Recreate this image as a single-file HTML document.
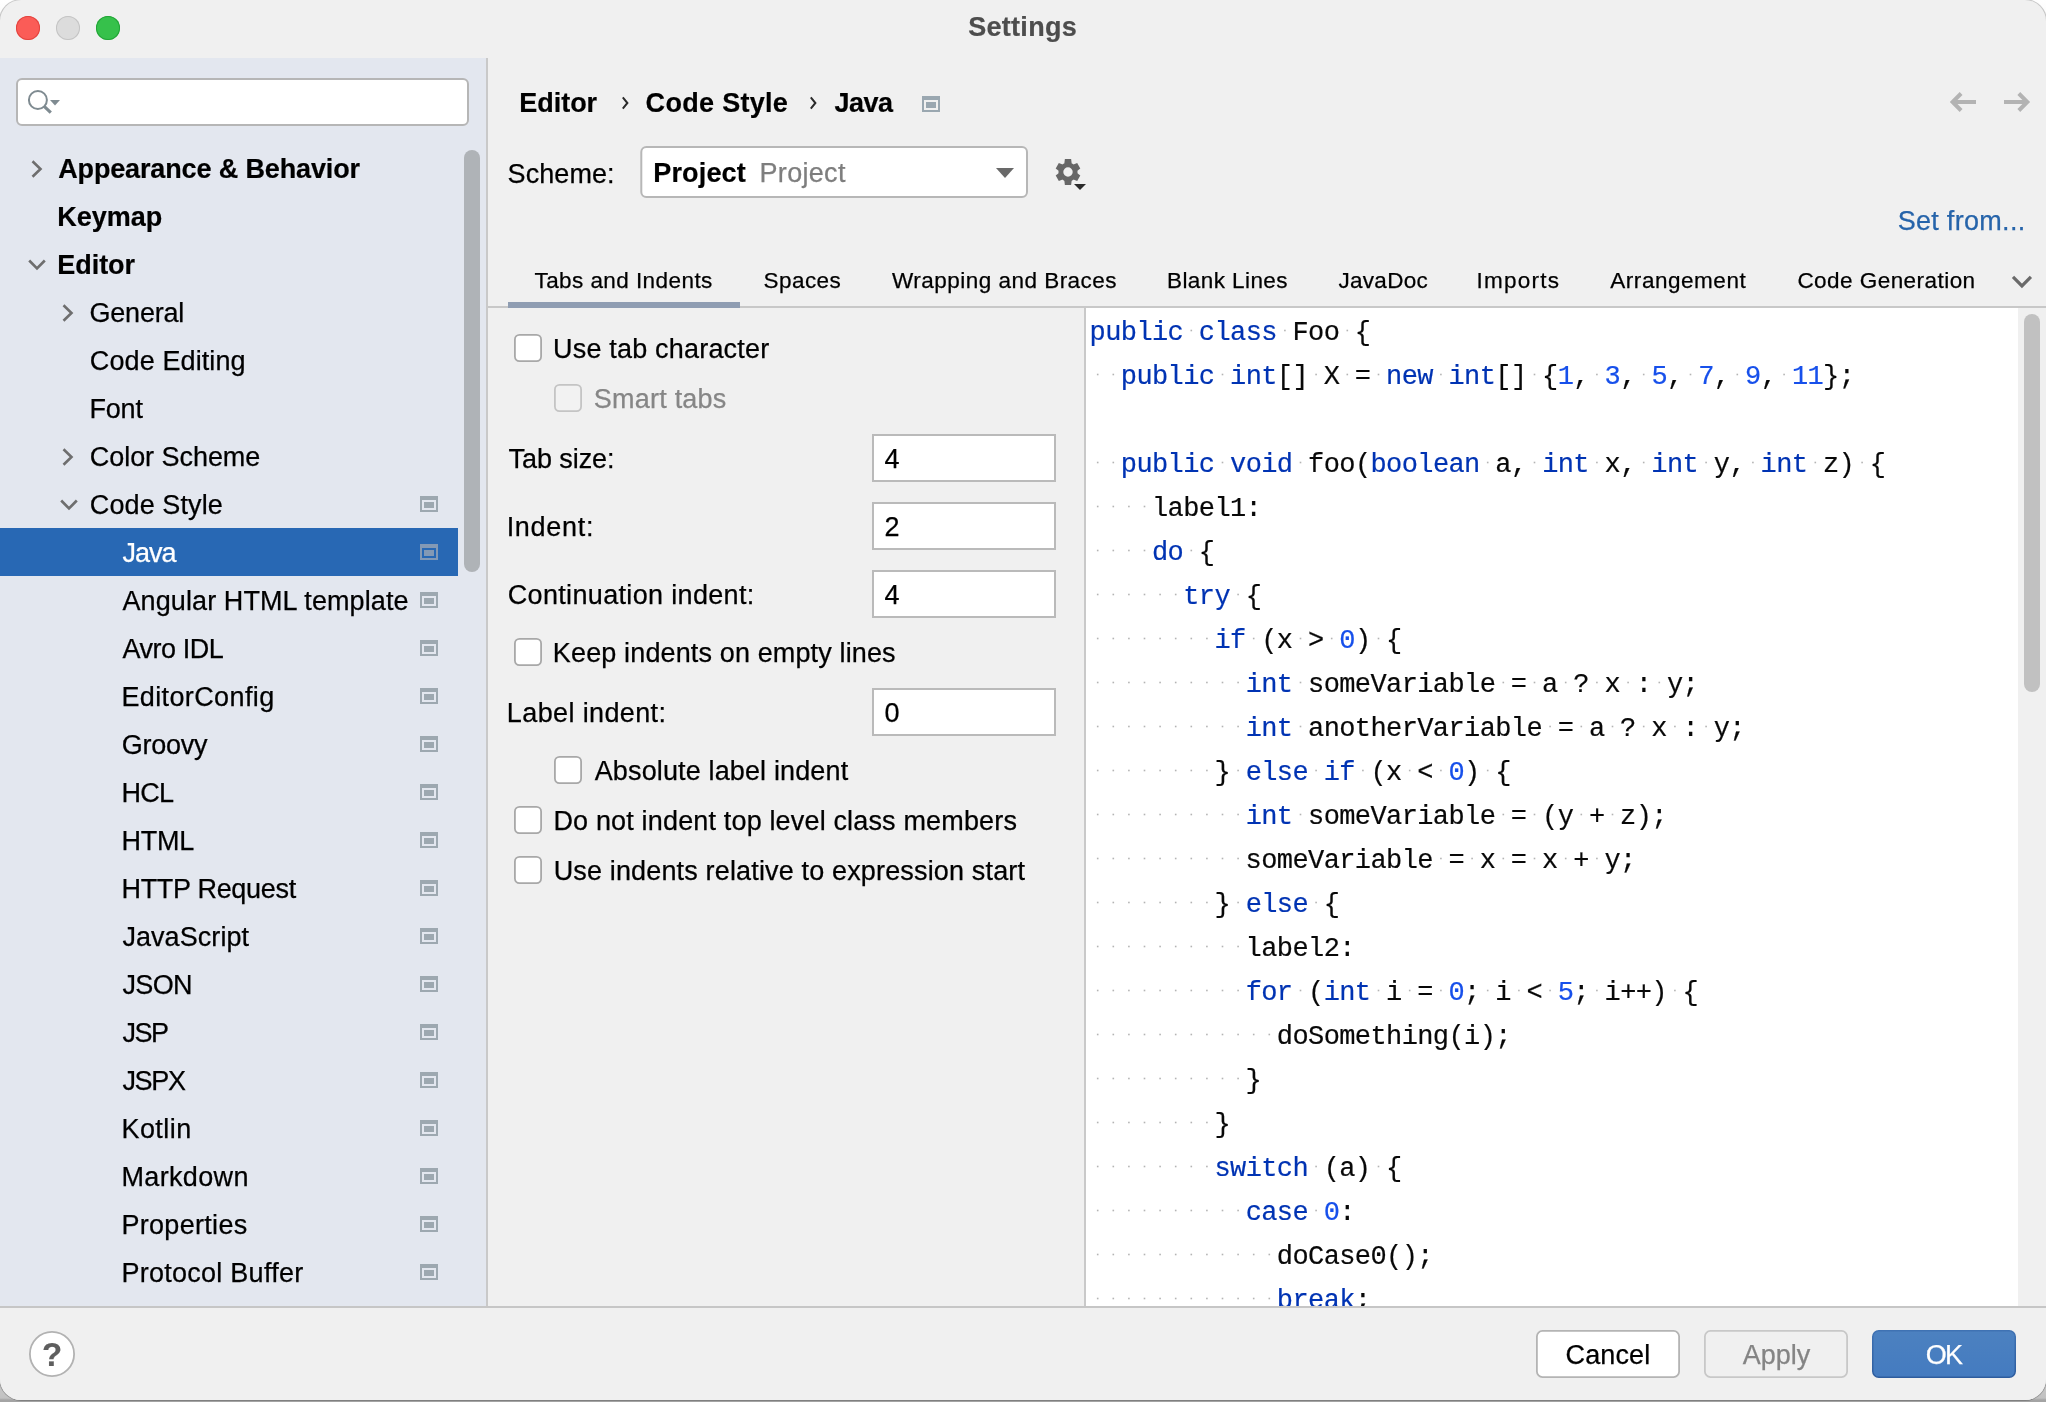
<!DOCTYPE html>
<html><head><meta charset="utf-8"><title>Settings</title>
<style>
html,body{margin:0;padding:0;}
body{width:2046px;height:1402px;overflow:hidden;background:#fff;font-family:"Liberation Sans",sans-serif;position:relative;}
.t{position:absolute;white-space:pre;font-family:"Liberation Sans",sans-serif;}
.i{position:absolute;overflow:visible;}
.abs{position:absolute;}
#shadow{position:absolute;left:0;top:0;width:2046px;height:1402px;background:linear-gradient(#fff 0,#f4f4f4 40px,#d8d8d8 1340px,#c2c2c2 1398px,#a4a4a4 1400px,#a4a4a4 1402px);}
#win{will-change:transform;position:absolute;left:0;top:0;width:2046px;height:1400px;border-radius:21px;background:#f0f0f0;overflow:hidden;box-shadow:0 0 0 1px rgba(0,0,0,.22);}
#side{position:absolute;left:0;top:58px;width:487px;height:1248px;background:#e3e7ef;overflow:hidden;}
#sideborder{position:absolute;left:486px;top:58px;width:2px;height:1248px;background:#c9c9c9;}
#code{position:absolute;left:1086px;top:308px;width:932px;height:998px;background:#fff;overflow:hidden;}
.cl{position:absolute;left:3.6px;height:44px;line-height:44px;font-family:"Liberation Mono",monospace;font-size:27px;letter-spacing:-0.6px;white-space:pre;color:#080808;-webkit-text-stroke:0.2px;}
.k{color:#0033b3}.n{color:#1750eb}
.cb{position:absolute;width:24.4px;height:24.4px;border:1.8px solid #a8a8a8;border-radius:5.5px;background:#fff;}
.in{position:absolute;left:872px;width:180px;height:44px;border:2px solid #bababa;background:#fff;}
.btn{position:absolute;top:1331px;width:140px;height:44px;border:1.5px solid #c4c4c4;border-radius:7px;background:#fff;box-sizing:content-box;}
</style></head><body>
<div id="shadow"></div>
<div id="win">

<div class="abs" style="left:16px;top:16px;width:24px;height:24px;border-radius:50%;background:#fb5c57;box-shadow:inset 0 0 0 1px #e2443f"></div>
<div class="abs" style="left:56px;top:16px;width:24px;height:24px;border-radius:50%;background:#dcdcdc;box-shadow:inset 0 0 0 1px #c4c4c4"></div>
<div class="abs" style="left:96px;top:16px;width:24px;height:24px;border-radius:50%;background:#36c14b;box-shadow:inset 0 0 0 1px #22a437"></div>
<div class="t" style="left:968.18px;top:3.0px;height:48px;line-height:48px;font-size:27px;font-weight:700;color:#4d4d4d;letter-spacing:0.292px;-webkit-text-stroke:0.2px;">Settings</div>
<div id="side">
</div>
<div id="sideborder"></div>
<svg class="i" style="left:15px;top:77px" width="457" height="52" viewBox="15 77 457 52"><rect x="17.0" y="79.0" width="451" height="46" rx="5.0" fill="#fff" stroke="#b6b6b6" stroke-width="2"/></svg>
<svg class="i" style="left:24px;top:86px" width="40" height="30" viewBox="24 86 40 30"><circle cx="37.9" cy="100" r="9" fill="none" stroke="#7f8b91" stroke-width="2"/><path d="M43.9,106.2 L50.8,112.6" stroke="#7f8b91" stroke-width="3.2" fill="none"/><path d="M50,100 H60 L55,105.6z" fill="#7f8b91"/></svg>
<div class="abs" style="left:0;top:528px;width:458px;height:48px;background:#2868b4"></div>
<div class="t" style="left:58.17px;top:144.5px;height:48px;line-height:48px;font-size:27px;font-weight:700;color:#000;letter-spacing:-0.136px;-webkit-text-stroke:0.2px;">Appearance &amp; Behavior</div>
<svg class="i" style="left:24.6px;top:157px" width="24" height="24" viewBox="-12 -12 24 24"><path d="M-4.50,-7.80 L3.50,0 L-4.50,7.80" fill="none" stroke="#6e6e6e" stroke-width="2.6" stroke-linecap="butt" stroke-linejoin="miter"/></svg>
<div class="t" style="left:57.24px;top:192.5px;height:48px;line-height:48px;font-size:27px;font-weight:700;color:#000;letter-spacing:-0.014px;-webkit-text-stroke:0.2px;">Keymap</div>
<div class="t" style="left:57.24px;top:240.5px;height:48px;line-height:48px;font-size:27px;font-weight:700;color:#000;letter-spacing:-0.034px;-webkit-text-stroke:0.2px;">Editor</div>
<svg class="i" style="left:25.0px;top:252.5px" width="24" height="24" viewBox="-12 -12 24 24"><path d="M-7.80,-4.50 L0,3.50 L7.80,-4.50" fill="none" stroke="#6e6e6e" stroke-width="2.6" stroke-linecap="butt" stroke-linejoin="miter"/></svg>
<div class="t" style="left:89.61px;top:288.5px;height:48px;line-height:48px;font-size:27px;font-weight:400;color:#000;letter-spacing:-0.255px;-webkit-text-stroke:0.25px;">General</div>
<svg class="i" style="left:56.400000000000006px;top:301px" width="24" height="24" viewBox="-12 -12 24 24"><path d="M-4.50,-7.80 L3.50,0 L-4.50,7.80" fill="none" stroke="#6e6e6e" stroke-width="2.6" stroke-linecap="butt" stroke-linejoin="miter"/></svg>
<div class="t" style="left:89.8px;top:336.5px;height:48px;line-height:48px;font-size:27px;font-weight:400;color:#000;letter-spacing:0.108px;-webkit-text-stroke:0.25px;">Code Editing</div>
<div class="t" style="left:89.46px;top:384.5px;height:48px;line-height:48px;font-size:27px;font-weight:400;color:#000;letter-spacing:-0.176px;-webkit-text-stroke:0.25px;">Font</div>
<div class="t" style="left:89.8px;top:432.5px;height:48px;line-height:48px;font-size:27px;font-weight:400;color:#000;letter-spacing:-0.051px;-webkit-text-stroke:0.25px;">Color Scheme</div>
<svg class="i" style="left:56.400000000000006px;top:445px" width="24" height="24" viewBox="-12 -12 24 24"><path d="M-4.50,-7.80 L3.50,0 L-4.50,7.80" fill="none" stroke="#6e6e6e" stroke-width="2.6" stroke-linecap="butt" stroke-linejoin="miter"/></svg>
<div class="t" style="left:89.8px;top:480.5px;height:48px;line-height:48px;font-size:27px;font-weight:400;color:#000;letter-spacing:0.101px;-webkit-text-stroke:0.25px;">Code Style</div>
<svg class="i" style="left:56.80000000000001px;top:492.5px" width="24" height="24" viewBox="-12 -12 24 24"><path d="M-7.80,-4.50 L0,3.50 L7.80,-4.50" fill="none" stroke="#6e6e6e" stroke-width="2.6" stroke-linecap="butt" stroke-linejoin="miter"/></svg>
<svg class="i" style="left:420px;top:496px" width="18" height="16" viewBox="0 0 18 16"><path d="M0,0H18V16H0z M2,4V14H16V4z" fill="#9da8b0" fill-rule="evenodd"/><rect x="4" y="6" width="10" height="6" fill="#9da8b0"/></svg>
<div class="t" style="left:122.46px;top:528.5px;height:48px;line-height:48px;font-size:27px;font-weight:400;color:#fff;letter-spacing:-0.964px;-webkit-text-stroke:0.25px;">Java</div>
<svg class="i" style="left:420px;top:544px" width="18" height="16" viewBox="0 0 18 16"><path d="M0,0H18V16H0z M2,4V14H16V4z" fill="#8399b5" fill-rule="evenodd"/><rect x="4" y="6" width="10" height="6" fill="#8399b5"/></svg>
<div class="t" style="left:122.53px;top:576.5px;height:48px;line-height:48px;font-size:27px;font-weight:400;color:#000;letter-spacing:0.094px;-webkit-text-stroke:0.25px;">Angular HTML template</div>
<svg class="i" style="left:420px;top:592px" width="18" height="16" viewBox="0 0 18 16"><path d="M0,0H18V16H0z M2,4V14H16V4z" fill="#9da8b0" fill-rule="evenodd"/><rect x="4" y="6" width="10" height="6" fill="#9da8b0"/></svg>
<div class="t" style="left:122.53px;top:624.5px;height:48px;line-height:48px;font-size:27px;font-weight:400;color:#000;letter-spacing:-0.47px;-webkit-text-stroke:0.25px;">Avro IDL</div>
<svg class="i" style="left:420px;top:640px" width="18" height="16" viewBox="0 0 18 16"><path d="M0,0H18V16H0z M2,4V14H16V4z" fill="#9da8b0" fill-rule="evenodd"/><rect x="4" y="6" width="10" height="6" fill="#9da8b0"/></svg>
<div class="t" style="left:121.46px;top:672.5px;height:48px;line-height:48px;font-size:27px;font-weight:400;color:#000;letter-spacing:0.374px;-webkit-text-stroke:0.25px;">EditorConfig</div>
<svg class="i" style="left:420px;top:688px" width="18" height="16" viewBox="0 0 18 16"><path d="M0,0H18V16H0z M2,4V14H16V4z" fill="#9da8b0" fill-rule="evenodd"/><rect x="4" y="6" width="10" height="6" fill="#9da8b0"/></svg>
<div class="t" style="left:121.64px;top:720.5px;height:48px;line-height:48px;font-size:27px;font-weight:400;color:#000;letter-spacing:-0.24px;-webkit-text-stroke:0.25px;">Groovy</div>
<svg class="i" style="left:420px;top:736px" width="18" height="16" viewBox="0 0 18 16"><path d="M0,0H18V16H0z M2,4V14H16V4z" fill="#9da8b0" fill-rule="evenodd"/><rect x="4" y="6" width="10" height="6" fill="#9da8b0"/></svg>
<div class="t" style="left:121.46px;top:768.5px;height:48px;line-height:48px;font-size:27px;font-weight:400;color:#000;letter-spacing:-0.736px;-webkit-text-stroke:0.25px;">HCL</div>
<svg class="i" style="left:420px;top:784px" width="18" height="16" viewBox="0 0 18 16"><path d="M0,0H18V16H0z M2,4V14H16V4z" fill="#9da8b0" fill-rule="evenodd"/><rect x="4" y="6" width="10" height="6" fill="#9da8b0"/></svg>
<div class="t" style="left:121.46px;top:816.5px;height:48px;line-height:48px;font-size:27px;font-weight:400;color:#000;letter-spacing:-0.23px;-webkit-text-stroke:0.25px;">HTML</div>
<svg class="i" style="left:420px;top:832px" width="18" height="16" viewBox="0 0 18 16"><path d="M0,0H18V16H0z M2,4V14H16V4z" fill="#9da8b0" fill-rule="evenodd"/><rect x="4" y="6" width="10" height="6" fill="#9da8b0"/></svg>
<div class="t" style="left:121.46px;top:864.5px;height:48px;line-height:48px;font-size:27px;font-weight:400;color:#000;letter-spacing:-0.302px;-webkit-text-stroke:0.25px;">HTTP Request</div>
<svg class="i" style="left:420px;top:880px" width="18" height="16" viewBox="0 0 18 16"><path d="M0,0H18V16H0z M2,4V14H16V4z" fill="#9da8b0" fill-rule="evenodd"/><rect x="4" y="6" width="10" height="6" fill="#9da8b0"/></svg>
<div class="t" style="left:122.4px;top:912.5px;height:48px;line-height:48px;font-size:27px;font-weight:400;color:#000;letter-spacing:0.069px;-webkit-text-stroke:0.25px;">JavaScript</div>
<svg class="i" style="left:420px;top:928px" width="18" height="16" viewBox="0 0 18 16"><path d="M0,0H18V16H0z M2,4V14H16V4z" fill="#9da8b0" fill-rule="evenodd"/><rect x="4" y="6" width="10" height="6" fill="#9da8b0"/></svg>
<div class="t" style="left:122.4px;top:960.5px;height:48px;line-height:48px;font-size:27px;font-weight:400;color:#000;letter-spacing:-0.635px;-webkit-text-stroke:0.25px;">JSON</div>
<svg class="i" style="left:420px;top:976px" width="18" height="16" viewBox="0 0 18 16"><path d="M0,0H18V16H0z M2,4V14H16V4z" fill="#9da8b0" fill-rule="evenodd"/><rect x="4" y="6" width="10" height="6" fill="#9da8b0"/></svg>
<div class="t" style="left:122.4px;top:1008.5px;height:48px;line-height:48px;font-size:27px;font-weight:400;color:#000;letter-spacing:-1.442px;-webkit-text-stroke:0.25px;">JSP</div>
<svg class="i" style="left:420px;top:1024px" width="18" height="16" viewBox="0 0 18 16"><path d="M0,0H18V16H0z M2,4V14H16V4z" fill="#9da8b0" fill-rule="evenodd"/><rect x="4" y="6" width="10" height="6" fill="#9da8b0"/></svg>
<div class="t" style="left:122.4px;top:1056.5px;height:48px;line-height:48px;font-size:27px;font-weight:400;color:#000;letter-spacing:-1.294px;-webkit-text-stroke:0.25px;">JSPX</div>
<svg class="i" style="left:420px;top:1072px" width="18" height="16" viewBox="0 0 18 16"><path d="M0,0H18V16H0z M2,4V14H16V4z" fill="#9da8b0" fill-rule="evenodd"/><rect x="4" y="6" width="10" height="6" fill="#9da8b0"/></svg>
<div class="t" style="left:121.46px;top:1104.5px;height:48px;line-height:48px;font-size:27px;font-weight:400;color:#000;letter-spacing:0.442px;-webkit-text-stroke:0.25px;">Kotlin</div>
<svg class="i" style="left:420px;top:1120px" width="18" height="16" viewBox="0 0 18 16"><path d="M0,0H18V16H0z M2,4V14H16V4z" fill="#9da8b0" fill-rule="evenodd"/><rect x="4" y="6" width="10" height="6" fill="#9da8b0"/></svg>
<div class="t" style="left:121.46px;top:1152.5px;height:48px;line-height:48px;font-size:27px;font-weight:400;color:#000;letter-spacing:0.353px;-webkit-text-stroke:0.25px;">Markdown</div>
<svg class="i" style="left:420px;top:1168px" width="18" height="16" viewBox="0 0 18 16"><path d="M0,0H18V16H0z M2,4V14H16V4z" fill="#9da8b0" fill-rule="evenodd"/><rect x="4" y="6" width="10" height="6" fill="#9da8b0"/></svg>
<div class="t" style="left:121.46px;top:1200.5px;height:48px;line-height:48px;font-size:27px;font-weight:400;color:#000;letter-spacing:0.301px;-webkit-text-stroke:0.25px;">Properties</div>
<svg class="i" style="left:420px;top:1216px" width="18" height="16" viewBox="0 0 18 16"><path d="M0,0H18V16H0z M2,4V14H16V4z" fill="#9da8b0" fill-rule="evenodd"/><rect x="4" y="6" width="10" height="6" fill="#9da8b0"/></svg>
<div class="t" style="left:121.46px;top:1248.5px;height:48px;line-height:48px;font-size:27px;font-weight:400;color:#000;letter-spacing:0.259px;-webkit-text-stroke:0.25px;">Protocol Buffer</div>
<svg class="i" style="left:420px;top:1264px" width="18" height="16" viewBox="0 0 18 16"><path d="M0,0H18V16H0z M2,4V14H16V4z" fill="#9da8b0" fill-rule="evenodd"/><rect x="4" y="6" width="10" height="6" fill="#9da8b0"/></svg>
<div class="abs" style="left:464px;top:150px;width:16px;height:422px;border-radius:8px;background:#afb3b7"></div>
<div class="t" style="left:519.24px;top:79.0px;height:48px;line-height:48px;font-size:27px;font-weight:700;color:#000;letter-spacing:-0.023px;-webkit-text-stroke:0.2px;">Editor</div>
<div class="t" style="left:645.62px;top:79.0px;height:48px;line-height:48px;font-size:27px;font-weight:700;color:#000;letter-spacing:0.303px;-webkit-text-stroke:0.2px;">Code Style</div>
<div class="t" style="left:834.55px;top:79.0px;height:48px;line-height:48px;font-size:27px;font-weight:700;color:#000;letter-spacing:-0.536px;-webkit-text-stroke:0.2px;">Java</div>
<svg class="i" style="left:616.6px;top:93px" width="16" height="20" viewBox="-8 -10 16 20"><path d="M-2.2,-5.6 L2.4,0 L-2.2,5.6" fill="none" stroke="#2b2b2b" stroke-width="2"/></svg>
<svg class="i" style="left:804.6px;top:93px" width="16" height="20" viewBox="-8 -10 16 20"><path d="M-2.2,-5.6 L2.4,0 L-2.2,5.6" fill="none" stroke="#2b2b2b" stroke-width="2"/></svg>
<svg class="i" style="left:922px;top:96.2px" width="18" height="16" viewBox="0 0 18 16"><path d="M0,0H18V16H0z M2,4V14H16V4z" fill="#9aa7b0" fill-rule="evenodd"/><rect x="4" y="6" width="10" height="6" fill="#9aa7b0"/></svg>
<svg class="i" style="left:1940px;top:86px" width="100" height="32" viewBox="1940 86 100 32"><g fill="none" stroke="#b3b3b3" stroke-width="4"><path d="M1961.1,93.5 L1952.6,102 L1961.1,110.5 M1952.6,102 H1976"/><path d="M2018.8,93.5 L2027.3,102 L2018.8,110.5 M2027.3,102 H2004"/></g></svg>
<div class="t" style="left:507.56px;top:149.5px;height:48px;line-height:48px;font-size:27px;font-weight:400;color:#000;letter-spacing:0.086px;-webkit-text-stroke:0.25px;">Scheme:</div>
<svg class="i" style="left:639px;top:145px" width="391" height="56" viewBox="639 145 391 56"><rect x="641.3" y="147.0" width="385.7" height="50" rx="5.0" fill="#fff" stroke="#b7b7b7" stroke-width="2"/></svg>
<div class="t" style="left:653.24px;top:149.0px;height:48px;line-height:48px;font-size:27px;font-weight:700;color:#000;letter-spacing:0.167px;-webkit-text-stroke:0.2px;">Project</div>
<div class="t" style="left:759.53px;top:149.0px;height:48px;line-height:48px;font-size:27px;font-weight:400;color:#7e7e7e;letter-spacing:0.31px;-webkit-text-stroke:0.25px;">Project</div>
<svg class="i" style="left:994px;top:166px" width="22" height="14" viewBox="994 166 22 14"><path d="M996,168 H1014 L1005,178z" fill="#696969"/></svg>
<svg class="i" style="left:1051.9px;top:155.9px" width="32" height="32" viewBox="-16 -16 32 32"><circle cx="0" cy="0" r="7.15" fill="none" stroke="#676767" stroke-width="4.90"/><path d="M-3.7,-8.4 L-3.1,-13.1 L3.1,-13.1 L3.7,-8.4z" fill="#676767" transform="rotate(0)"/><path d="M-3.7,-8.4 L-3.1,-12.4 L3.1,-12.4 L3.7,-8.4z" fill="#676767" transform="rotate(60)"/><path d="M-3.7,-8.4 L-3.1,-12.4 L3.1,-12.4 L3.7,-8.4z" fill="#676767" transform="rotate(120)"/><path d="M-3.7,-8.4 L-3.1,-13.1 L3.1,-13.1 L3.7,-8.4z" fill="#676767" transform="rotate(180)"/><path d="M-3.7,-8.4 L-3.1,-12.4 L3.1,-12.4 L3.7,-8.4z" fill="#676767" transform="rotate(240)"/><path d="M-3.7,-8.4 L-3.1,-12.4 L3.1,-12.4 L3.7,-8.4z" fill="#676767" transform="rotate(300)"/></svg>
<svg class="i" style="left:1072px;top:182px" width="16" height="10" viewBox="1072 182 16 10"><path d="M1074,184 H1086 L1080,190.1z" fill="#2b2b2b"/></svg>
<div class="t" style="left:1897.65px;top:197.0px;height:48px;line-height:48px;font-size:27px;font-weight:400;color:#2664aa;letter-spacing:0.301px;-webkit-text-stroke:0.25px;">Set from...</div>
<div class="t" style="left:534.49px;top:256.5px;height:48px;line-height:48px;font-size:22.5px;font-weight:400;color:#000;letter-spacing:0.43px;-webkit-text-stroke:0.25px;">Tabs and Indents</div>
<div class="t" style="left:763.55px;top:256.5px;height:48px;line-height:48px;font-size:22.5px;font-weight:400;color:#000;letter-spacing:0.437px;-webkit-text-stroke:0.25px;">Spaces</div>
<div class="t" style="left:892.06px;top:256.5px;height:48px;line-height:48px;font-size:22.5px;font-weight:400;color:#000;letter-spacing:0.475px;-webkit-text-stroke:0.25px;">Wrapping and Braces</div>
<div class="t" style="left:1166.99px;top:256.5px;height:48px;line-height:48px;font-size:22.5px;font-weight:400;color:#000;letter-spacing:0.422px;-webkit-text-stroke:0.25px;">Blank Lines</div>
<div class="t" style="left:1338.4px;top:256.5px;height:48px;line-height:48px;font-size:22.5px;font-weight:400;color:#000;letter-spacing:0.315px;-webkit-text-stroke:0.25px;">JavaDoc</div>
<div class="t" style="left:1476.52px;top:256.5px;height:48px;line-height:48px;font-size:22.5px;font-weight:400;color:#000;letter-spacing:1.233px;-webkit-text-stroke:0.25px;">Imports</div>
<div class="t" style="left:1610.29px;top:256.5px;height:48px;line-height:48px;font-size:22.5px;font-weight:400;color:#000;letter-spacing:0.534px;-webkit-text-stroke:0.25px;">Arrangement</div>
<div class="t" style="left:1797.38px;top:256.5px;height:48px;line-height:48px;font-size:22.5px;font-weight:400;color:#000;letter-spacing:0.457px;-webkit-text-stroke:0.25px;">Code Generation</div>
<svg class="i" style="left:2008px;top:272px" width="28" height="20" viewBox="2008 272 28 20"><path d="M2013,276.9 L2021.95,285.9 L2030.9,276.9" fill="none" stroke="#6a6a6a" stroke-width="3.2"/></svg>
<div class="abs" style="left:488px;top:306px;width:1558px;height:2px;background:#c8c8c8"></div>
<div class="abs" style="left:508px;top:302px;width:232px;height:6px;background:#8f9db2"></div>
<svg class="i" style="left:513px;top:333px" width="32" height="32" viewBox="513 333 32 32"><rect x="514.9" y="334.9" width="26.2" height="26.2" rx="4.6" fill="#fff" stroke="#a8a8a8" stroke-width="1.8"/></svg>
<div class="t" style="left:553.0px;top:324.5px;height:48px;line-height:48px;font-size:27px;font-weight:400;color:#000;letter-spacing:0.194px;-webkit-text-stroke:0.25px;">Use tab character</div>
<svg class="i" style="left:553px;top:383px" width="32" height="32" viewBox="553 383 32 32"><rect x="554.9" y="384.9" width="26.2" height="26.2" rx="4.6" fill="#f2f2f2" stroke="#c4c4c4" stroke-width="1.8"/></svg>
<div class="t" style="left:593.84px;top:374.5px;height:48px;line-height:48px;font-size:27px;font-weight:400;color:#868686;letter-spacing:0.219px;-webkit-text-stroke:0.25px;">Smart tabs</div>
<div class="t" style="left:508.61px;top:434.5px;height:48px;line-height:48px;font-size:27px;font-weight:400;color:#000;letter-spacing:-0.084px;-webkit-text-stroke:0.25px;">Tab size:</div>
<div class="in" style="top:434px"></div>
<div class="t" style="left:884.5px;top:434.5px;height:48px;line-height:48px;font-size:27px;font-weight:400;color:#000;letter-spacing:0px;-webkit-text-stroke:0.25px;">4</div>
<div class="t" style="left:506.67px;top:502.5px;height:48px;line-height:48px;font-size:27px;font-weight:400;color:#000;letter-spacing:0.697px;-webkit-text-stroke:0.25px;">Indent:</div>
<div class="in" style="top:502px"></div>
<div class="t" style="left:884.5px;top:502.5px;height:48px;line-height:48px;font-size:27px;font-weight:400;color:#000;letter-spacing:0px;-webkit-text-stroke:0.25px;">2</div>
<div class="t" style="left:507.74px;top:570.5px;height:48px;line-height:48px;font-size:27px;font-weight:400;color:#000;letter-spacing:0.337px;-webkit-text-stroke:0.25px;">Continuation indent:</div>
<div class="in" style="top:570px"></div>
<div class="t" style="left:884.5px;top:570.5px;height:48px;line-height:48px;font-size:27px;font-weight:400;color:#000;letter-spacing:0px;-webkit-text-stroke:0.25px;">4</div>
<div class="t" style="left:506.87px;top:688.5px;height:48px;line-height:48px;font-size:27px;font-weight:400;color:#000;letter-spacing:0.373px;-webkit-text-stroke:0.25px;">Label indent:</div>
<div class="in" style="top:688px"></div>
<div class="t" style="left:884.5px;top:688.5px;height:48px;line-height:48px;font-size:27px;font-weight:400;color:#000;letter-spacing:0px;-webkit-text-stroke:0.25px;">0</div>
<svg class="i" style="left:513px;top:637px" width="32" height="32" viewBox="513 637 32 32"><rect x="514.9" y="638.9" width="26.2" height="26.2" rx="4.6" fill="#fff" stroke="#a8a8a8" stroke-width="1.8"/></svg>
<div class="t" style="left:552.87px;top:628.5px;height:48px;line-height:48px;font-size:27px;font-weight:400;color:#000;letter-spacing:0.136px;-webkit-text-stroke:0.25px;">Keep indents on empty lines</div>
<svg class="i" style="left:553px;top:755px" width="32" height="32" viewBox="553 755 32 32"><rect x="554.9" y="756.9" width="26.2" height="26.2" rx="4.6" fill="#fff" stroke="#a8a8a8" stroke-width="1.8"/></svg>
<div class="t" style="left:594.69px;top:746.5px;height:48px;line-height:48px;font-size:27px;font-weight:400;color:#000;letter-spacing:0.138px;-webkit-text-stroke:0.25px;">Absolute label indent</div>
<svg class="i" style="left:513px;top:805px" width="32" height="32" viewBox="513 805 32 32"><rect x="514.9" y="806.9" width="26.2" height="26.2" rx="4.6" fill="#fff" stroke="#a8a8a8" stroke-width="1.8"/></svg>
<div class="t" style="left:553.46px;top:796.5px;height:48px;line-height:48px;font-size:27px;font-weight:400;color:#000;letter-spacing:0.159px;-webkit-text-stroke:0.25px;">Do not indent top level class members</div>
<svg class="i" style="left:513px;top:855px" width="32" height="32" viewBox="513 855 32 32"><rect x="514.9" y="856.9" width="26.2" height="26.2" rx="4.6" fill="#fff" stroke="#a8a8a8" stroke-width="1.8"/></svg>
<div class="t" style="left:553.65px;top:846.5px;height:48px;line-height:48px;font-size:27px;font-weight:400;color:#000;letter-spacing:0.156px;-webkit-text-stroke:0.25px;">Use indents relative to expression start</div>
<div class="abs" style="left:1084px;top:308px;width:2px;height:998px;background:#c9c9c9"></div>
<div id="code">
<div class="cl" style="top:3px"><span class="k">public</span> <span class="k">class</span> Foo {</div>
<div class="cl" style="top:47px">  <span class="k">public</span> <span class="k">int</span>[] X = <span class="k">new</span> <span class="k">int</span>[] {<span class="n">1</span>, <span class="n">3</span>, <span class="n">5</span>, <span class="n">7</span>, <span class="n">9</span>, <span class="n">11</span>};</div>
<div class="cl" style="top:91px"></div>
<div class="cl" style="top:135px">  <span class="k">public</span> <span class="k">void</span> foo(<span class="k">boolean</span> a, <span class="k">int</span> x, <span class="k">int</span> y, <span class="k">int</span> z) {</div>
<div class="cl" style="top:179px">    label1:</div>
<div class="cl" style="top:223px">    <span class="k">do</span> {</div>
<div class="cl" style="top:267px">      <span class="k">try</span> {</div>
<div class="cl" style="top:311px">        <span class="k">if</span> (x &gt; <span class="n">0</span>) {</div>
<div class="cl" style="top:355px">          <span class="k">int</span> someVariable = a ? x : y;</div>
<div class="cl" style="top:399px">          <span class="k">int</span> anotherVariable = a ? x : y;</div>
<div class="cl" style="top:443px">        } <span class="k">else</span> <span class="k">if</span> (x &lt; <span class="n">0</span>) {</div>
<div class="cl" style="top:487px">          <span class="k">int</span> someVariable = (y + z);</div>
<div class="cl" style="top:531px">          someVariable = x = x + y;</div>
<div class="cl" style="top:575px">        } <span class="k">else</span> {</div>
<div class="cl" style="top:619px">          label2:</div>
<div class="cl" style="top:663px">          <span class="k">for</span> (<span class="k">int</span> i = <span class="n">0</span>; i &lt; <span class="n">5</span>; i++) {</div>
<div class="cl" style="top:707px">            doSomething(i);</div>
<div class="cl" style="top:751px">          }</div>
<div class="cl" style="top:795px">        }</div>
<div class="cl" style="top:839px">        <span class="k">switch</span> (a) {</div>
<div class="cl" style="top:883px">          <span class="k">case</span> <span class="n">0</span>:</div>
<div class="cl" style="top:927px">            doCase0();</div>
<div class="cl" style="top:971px">            <span class="k">break</span>;</div>
<svg class="i" style="left:0;top:0" width="932" height="998" viewBox="0 0 932 998" fill="#b4b4b4"><rect x="104.50" y="21.70" width="1.6" height="1.6"/><rect x="198.10" y="21.70" width="1.6" height="1.6"/><rect x="260.50" y="21.70" width="1.6" height="1.6"/><rect x="10.90" y="65.70" width="1.6" height="1.6"/><rect x="26.50" y="65.70" width="1.6" height="1.6"/><rect x="135.70" y="65.70" width="1.6" height="1.6"/><rect x="229.30" y="65.70" width="1.6" height="1.6"/><rect x="260.50" y="65.70" width="1.6" height="1.6"/><rect x="291.70" y="65.70" width="1.6" height="1.6"/><rect x="354.10" y="65.70" width="1.6" height="1.6"/><rect x="447.70" y="65.70" width="1.6" height="1.6"/><rect x="510.10" y="65.70" width="1.6" height="1.6"/><rect x="556.90" y="65.70" width="1.6" height="1.6"/><rect x="603.70" y="65.70" width="1.6" height="1.6"/><rect x="650.50" y="65.70" width="1.6" height="1.6"/><rect x="697.30" y="65.70" width="1.6" height="1.6"/><rect x="10.90" y="153.70" width="1.6" height="1.6"/><rect x="26.50" y="153.70" width="1.6" height="1.6"/><rect x="135.70" y="153.70" width="1.6" height="1.6"/><rect x="213.70" y="153.70" width="1.6" height="1.6"/><rect x="400.90" y="153.70" width="1.6" height="1.6"/><rect x="447.70" y="153.70" width="1.6" height="1.6"/><rect x="510.10" y="153.70" width="1.6" height="1.6"/><rect x="556.90" y="153.70" width="1.6" height="1.6"/><rect x="619.30" y="153.70" width="1.6" height="1.6"/><rect x="666.10" y="153.70" width="1.6" height="1.6"/><rect x="728.50" y="153.70" width="1.6" height="1.6"/><rect x="775.30" y="153.70" width="1.6" height="1.6"/><rect x="10.90" y="197.70" width="1.6" height="1.6"/><rect x="26.50" y="197.70" width="1.6" height="1.6"/><rect x="42.10" y="197.70" width="1.6" height="1.6"/><rect x="57.70" y="197.70" width="1.6" height="1.6"/><rect x="10.90" y="241.70" width="1.6" height="1.6"/><rect x="26.50" y="241.70" width="1.6" height="1.6"/><rect x="42.10" y="241.70" width="1.6" height="1.6"/><rect x="57.70" y="241.70" width="1.6" height="1.6"/><rect x="104.50" y="241.70" width="1.6" height="1.6"/><rect x="10.90" y="285.70" width="1.6" height="1.6"/><rect x="26.50" y="285.70" width="1.6" height="1.6"/><rect x="42.10" y="285.70" width="1.6" height="1.6"/><rect x="57.70" y="285.70" width="1.6" height="1.6"/><rect x="73.30" y="285.70" width="1.6" height="1.6"/><rect x="88.90" y="285.70" width="1.6" height="1.6"/><rect x="151.30" y="285.70" width="1.6" height="1.6"/><rect x="10.90" y="329.70" width="1.6" height="1.6"/><rect x="26.50" y="329.70" width="1.6" height="1.6"/><rect x="42.10" y="329.70" width="1.6" height="1.6"/><rect x="57.70" y="329.70" width="1.6" height="1.6"/><rect x="73.30" y="329.70" width="1.6" height="1.6"/><rect x="88.90" y="329.70" width="1.6" height="1.6"/><rect x="104.50" y="329.70" width="1.6" height="1.6"/><rect x="120.10" y="329.70" width="1.6" height="1.6"/><rect x="166.90" y="329.70" width="1.6" height="1.6"/><rect x="213.70" y="329.70" width="1.6" height="1.6"/><rect x="244.90" y="329.70" width="1.6" height="1.6"/><rect x="291.70" y="329.70" width="1.6" height="1.6"/><rect x="10.90" y="373.70" width="1.6" height="1.6"/><rect x="26.50" y="373.70" width="1.6" height="1.6"/><rect x="42.10" y="373.70" width="1.6" height="1.6"/><rect x="57.70" y="373.70" width="1.6" height="1.6"/><rect x="73.30" y="373.70" width="1.6" height="1.6"/><rect x="88.90" y="373.70" width="1.6" height="1.6"/><rect x="104.50" y="373.70" width="1.6" height="1.6"/><rect x="120.10" y="373.70" width="1.6" height="1.6"/><rect x="135.70" y="373.70" width="1.6" height="1.6"/><rect x="151.30" y="373.70" width="1.6" height="1.6"/><rect x="213.70" y="373.70" width="1.6" height="1.6"/><rect x="416.50" y="373.70" width="1.6" height="1.6"/><rect x="447.70" y="373.70" width="1.6" height="1.6"/><rect x="478.90" y="373.70" width="1.6" height="1.6"/><rect x="510.10" y="373.70" width="1.6" height="1.6"/><rect x="541.30" y="373.70" width="1.6" height="1.6"/><rect x="572.50" y="373.70" width="1.6" height="1.6"/><rect x="10.90" y="417.70" width="1.6" height="1.6"/><rect x="26.50" y="417.70" width="1.6" height="1.6"/><rect x="42.10" y="417.70" width="1.6" height="1.6"/><rect x="57.70" y="417.70" width="1.6" height="1.6"/><rect x="73.30" y="417.70" width="1.6" height="1.6"/><rect x="88.90" y="417.70" width="1.6" height="1.6"/><rect x="104.50" y="417.70" width="1.6" height="1.6"/><rect x="120.10" y="417.70" width="1.6" height="1.6"/><rect x="135.70" y="417.70" width="1.6" height="1.6"/><rect x="151.30" y="417.70" width="1.6" height="1.6"/><rect x="213.70" y="417.70" width="1.6" height="1.6"/><rect x="463.30" y="417.70" width="1.6" height="1.6"/><rect x="494.50" y="417.70" width="1.6" height="1.6"/><rect x="525.70" y="417.70" width="1.6" height="1.6"/><rect x="556.90" y="417.70" width="1.6" height="1.6"/><rect x="588.10" y="417.70" width="1.6" height="1.6"/><rect x="619.30" y="417.70" width="1.6" height="1.6"/><rect x="10.90" y="461.70" width="1.6" height="1.6"/><rect x="26.50" y="461.70" width="1.6" height="1.6"/><rect x="42.10" y="461.70" width="1.6" height="1.6"/><rect x="57.70" y="461.70" width="1.6" height="1.6"/><rect x="73.30" y="461.70" width="1.6" height="1.6"/><rect x="88.90" y="461.70" width="1.6" height="1.6"/><rect x="104.50" y="461.70" width="1.6" height="1.6"/><rect x="120.10" y="461.70" width="1.6" height="1.6"/><rect x="151.30" y="461.70" width="1.6" height="1.6"/><rect x="229.30" y="461.70" width="1.6" height="1.6"/><rect x="276.10" y="461.70" width="1.6" height="1.6"/><rect x="322.90" y="461.70" width="1.6" height="1.6"/><rect x="354.10" y="461.70" width="1.6" height="1.6"/><rect x="400.90" y="461.70" width="1.6" height="1.6"/><rect x="10.90" y="505.70" width="1.6" height="1.6"/><rect x="26.50" y="505.70" width="1.6" height="1.6"/><rect x="42.10" y="505.70" width="1.6" height="1.6"/><rect x="57.70" y="505.70" width="1.6" height="1.6"/><rect x="73.30" y="505.70" width="1.6" height="1.6"/><rect x="88.90" y="505.70" width="1.6" height="1.6"/><rect x="104.50" y="505.70" width="1.6" height="1.6"/><rect x="120.10" y="505.70" width="1.6" height="1.6"/><rect x="135.70" y="505.70" width="1.6" height="1.6"/><rect x="151.30" y="505.70" width="1.6" height="1.6"/><rect x="213.70" y="505.70" width="1.6" height="1.6"/><rect x="416.50" y="505.70" width="1.6" height="1.6"/><rect x="447.70" y="505.70" width="1.6" height="1.6"/><rect x="494.50" y="505.70" width="1.6" height="1.6"/><rect x="525.70" y="505.70" width="1.6" height="1.6"/><rect x="10.90" y="549.70" width="1.6" height="1.6"/><rect x="26.50" y="549.70" width="1.6" height="1.6"/><rect x="42.10" y="549.70" width="1.6" height="1.6"/><rect x="57.70" y="549.70" width="1.6" height="1.6"/><rect x="73.30" y="549.70" width="1.6" height="1.6"/><rect x="88.90" y="549.70" width="1.6" height="1.6"/><rect x="104.50" y="549.70" width="1.6" height="1.6"/><rect x="120.10" y="549.70" width="1.6" height="1.6"/><rect x="135.70" y="549.70" width="1.6" height="1.6"/><rect x="151.30" y="549.70" width="1.6" height="1.6"/><rect x="354.10" y="549.70" width="1.6" height="1.6"/><rect x="385.30" y="549.70" width="1.6" height="1.6"/><rect x="416.50" y="549.70" width="1.6" height="1.6"/><rect x="447.70" y="549.70" width="1.6" height="1.6"/><rect x="478.90" y="549.70" width="1.6" height="1.6"/><rect x="510.10" y="549.70" width="1.6" height="1.6"/><rect x="10.90" y="593.70" width="1.6" height="1.6"/><rect x="26.50" y="593.70" width="1.6" height="1.6"/><rect x="42.10" y="593.70" width="1.6" height="1.6"/><rect x="57.70" y="593.70" width="1.6" height="1.6"/><rect x="73.30" y="593.70" width="1.6" height="1.6"/><rect x="88.90" y="593.70" width="1.6" height="1.6"/><rect x="104.50" y="593.70" width="1.6" height="1.6"/><rect x="120.10" y="593.70" width="1.6" height="1.6"/><rect x="151.30" y="593.70" width="1.6" height="1.6"/><rect x="229.30" y="593.70" width="1.6" height="1.6"/><rect x="10.90" y="637.70" width="1.6" height="1.6"/><rect x="26.50" y="637.70" width="1.6" height="1.6"/><rect x="42.10" y="637.70" width="1.6" height="1.6"/><rect x="57.70" y="637.70" width="1.6" height="1.6"/><rect x="73.30" y="637.70" width="1.6" height="1.6"/><rect x="88.90" y="637.70" width="1.6" height="1.6"/><rect x="104.50" y="637.70" width="1.6" height="1.6"/><rect x="120.10" y="637.70" width="1.6" height="1.6"/><rect x="135.70" y="637.70" width="1.6" height="1.6"/><rect x="151.30" y="637.70" width="1.6" height="1.6"/><rect x="10.90" y="681.70" width="1.6" height="1.6"/><rect x="26.50" y="681.70" width="1.6" height="1.6"/><rect x="42.10" y="681.70" width="1.6" height="1.6"/><rect x="57.70" y="681.70" width="1.6" height="1.6"/><rect x="73.30" y="681.70" width="1.6" height="1.6"/><rect x="88.90" y="681.70" width="1.6" height="1.6"/><rect x="104.50" y="681.70" width="1.6" height="1.6"/><rect x="120.10" y="681.70" width="1.6" height="1.6"/><rect x="135.70" y="681.70" width="1.6" height="1.6"/><rect x="151.30" y="681.70" width="1.6" height="1.6"/><rect x="213.70" y="681.70" width="1.6" height="1.6"/><rect x="291.70" y="681.70" width="1.6" height="1.6"/><rect x="322.90" y="681.70" width="1.6" height="1.6"/><rect x="354.10" y="681.70" width="1.6" height="1.6"/><rect x="400.90" y="681.70" width="1.6" height="1.6"/><rect x="432.10" y="681.70" width="1.6" height="1.6"/><rect x="463.30" y="681.70" width="1.6" height="1.6"/><rect x="510.10" y="681.70" width="1.6" height="1.6"/><rect x="588.10" y="681.70" width="1.6" height="1.6"/><rect x="10.90" y="725.70" width="1.6" height="1.6"/><rect x="26.50" y="725.70" width="1.6" height="1.6"/><rect x="42.10" y="725.70" width="1.6" height="1.6"/><rect x="57.70" y="725.70" width="1.6" height="1.6"/><rect x="73.30" y="725.70" width="1.6" height="1.6"/><rect x="88.90" y="725.70" width="1.6" height="1.6"/><rect x="104.50" y="725.70" width="1.6" height="1.6"/><rect x="120.10" y="725.70" width="1.6" height="1.6"/><rect x="135.70" y="725.70" width="1.6" height="1.6"/><rect x="151.30" y="725.70" width="1.6" height="1.6"/><rect x="166.90" y="725.70" width="1.6" height="1.6"/><rect x="182.50" y="725.70" width="1.6" height="1.6"/><rect x="10.90" y="769.70" width="1.6" height="1.6"/><rect x="26.50" y="769.70" width="1.6" height="1.6"/><rect x="42.10" y="769.70" width="1.6" height="1.6"/><rect x="57.70" y="769.70" width="1.6" height="1.6"/><rect x="73.30" y="769.70" width="1.6" height="1.6"/><rect x="88.90" y="769.70" width="1.6" height="1.6"/><rect x="104.50" y="769.70" width="1.6" height="1.6"/><rect x="120.10" y="769.70" width="1.6" height="1.6"/><rect x="135.70" y="769.70" width="1.6" height="1.6"/><rect x="151.30" y="769.70" width="1.6" height="1.6"/><rect x="10.90" y="813.70" width="1.6" height="1.6"/><rect x="26.50" y="813.70" width="1.6" height="1.6"/><rect x="42.10" y="813.70" width="1.6" height="1.6"/><rect x="57.70" y="813.70" width="1.6" height="1.6"/><rect x="73.30" y="813.70" width="1.6" height="1.6"/><rect x="88.90" y="813.70" width="1.6" height="1.6"/><rect x="104.50" y="813.70" width="1.6" height="1.6"/><rect x="120.10" y="813.70" width="1.6" height="1.6"/><rect x="10.90" y="857.70" width="1.6" height="1.6"/><rect x="26.50" y="857.70" width="1.6" height="1.6"/><rect x="42.10" y="857.70" width="1.6" height="1.6"/><rect x="57.70" y="857.70" width="1.6" height="1.6"/><rect x="73.30" y="857.70" width="1.6" height="1.6"/><rect x="88.90" y="857.70" width="1.6" height="1.6"/><rect x="104.50" y="857.70" width="1.6" height="1.6"/><rect x="120.10" y="857.70" width="1.6" height="1.6"/><rect x="229.30" y="857.70" width="1.6" height="1.6"/><rect x="291.70" y="857.70" width="1.6" height="1.6"/><rect x="10.90" y="901.70" width="1.6" height="1.6"/><rect x="26.50" y="901.70" width="1.6" height="1.6"/><rect x="42.10" y="901.70" width="1.6" height="1.6"/><rect x="57.70" y="901.70" width="1.6" height="1.6"/><rect x="73.30" y="901.70" width="1.6" height="1.6"/><rect x="88.90" y="901.70" width="1.6" height="1.6"/><rect x="104.50" y="901.70" width="1.6" height="1.6"/><rect x="120.10" y="901.70" width="1.6" height="1.6"/><rect x="135.70" y="901.70" width="1.6" height="1.6"/><rect x="151.30" y="901.70" width="1.6" height="1.6"/><rect x="229.30" y="901.70" width="1.6" height="1.6"/><rect x="10.90" y="945.70" width="1.6" height="1.6"/><rect x="26.50" y="945.70" width="1.6" height="1.6"/><rect x="42.10" y="945.70" width="1.6" height="1.6"/><rect x="57.70" y="945.70" width="1.6" height="1.6"/><rect x="73.30" y="945.70" width="1.6" height="1.6"/><rect x="88.90" y="945.70" width="1.6" height="1.6"/><rect x="104.50" y="945.70" width="1.6" height="1.6"/><rect x="120.10" y="945.70" width="1.6" height="1.6"/><rect x="135.70" y="945.70" width="1.6" height="1.6"/><rect x="151.30" y="945.70" width="1.6" height="1.6"/><rect x="166.90" y="945.70" width="1.6" height="1.6"/><rect x="182.50" y="945.70" width="1.6" height="1.6"/><rect x="10.90" y="989.70" width="1.6" height="1.6"/><rect x="26.50" y="989.70" width="1.6" height="1.6"/><rect x="42.10" y="989.70" width="1.6" height="1.6"/><rect x="57.70" y="989.70" width="1.6" height="1.6"/><rect x="73.30" y="989.70" width="1.6" height="1.6"/><rect x="88.90" y="989.70" width="1.6" height="1.6"/><rect x="104.50" y="989.70" width="1.6" height="1.6"/><rect x="120.10" y="989.70" width="1.6" height="1.6"/><rect x="135.70" y="989.70" width="1.6" height="1.6"/><rect x="151.30" y="989.70" width="1.6" height="1.6"/><rect x="166.90" y="989.70" width="1.6" height="1.6"/><rect x="182.50" y="989.70" width="1.6" height="1.6"/></svg>
</div>
<div class="abs" style="left:2024px;top:314px;width:16px;height:378px;border-radius:8px;background:#c1c1c1"></div>
<div class="abs" style="left:0;top:1306px;width:2046px;height:96px;background:#f0f0f0"></div>
<div class="abs" style="left:0;top:1306px;width:2046px;height:2px;background:#c6c6c6"></div>
<svg class="i" style="left:26px;top:1328px" width="52" height="52" viewBox="26 1328 52 52"><circle cx="52" cy="1354" r="22.1" fill="#fff" stroke="#b2b2b2" stroke-width="1.8"/></svg>
<div class="t" style="left:41.9px;top:1330.8px;height:48px;line-height:48px;font-size:33px;font-weight:700;color:#5e5e5e;letter-spacing:0px;-webkit-text-stroke:0.2px;">?</div>
<svg class="i" style="left:1535px;top:1329px" width="148" height="52" viewBox="1535 1329 148 52"><rect x="1536.9" y="1330.9" width="142.2" height="46.2" rx="5.6" fill="#fff" stroke="#b4b4b4" stroke-width="1.8"/></svg>
<svg class="i" style="left:1703px;top:1329px" width="148" height="52" viewBox="1703 1329 148 52"><rect x="1704.9" y="1330.9" width="142.2" height="46.2" rx="5.6" fill="#f0f0f0" stroke="#c8c8c8" stroke-width="1.8"/></svg>
<svg class="i" style="left:1870px;top:1328px" width="150" height="52" viewBox="1870 1328 150 52"><defs><linearGradient id="okg" x1="0" y1="0" x2="0" y2="1"><stop offset="0" stop-color="#4c81c0"/><stop offset="1" stop-color="#447bc0"/></linearGradient><linearGradient id="okb" x1="0" y1="0" x2="0" y2="1"><stop offset="0" stop-color="#3f72b3"/><stop offset="1" stop-color="#2d5c9e"/></linearGradient></defs><rect x="1872.75" y="1330.75" width="142.5" height="46.5" rx="6" fill="url(#okg)" stroke="url(#okb)" stroke-width="1.5"/></svg>
<div class="t" style="left:1565.59px;top:1330.5px;height:48px;line-height:48px;font-size:27px;font-weight:400;color:#000;letter-spacing:0.119px;-webkit-text-stroke:0.25px;">Cancel</div>
<div class="t" style="left:1742.69px;top:1330.5px;height:48px;line-height:48px;font-size:27px;font-weight:400;color:#848484;letter-spacing:-0.024px;-webkit-text-stroke:0.25px;">Apply</div>
<div class="t" style="left:1925.71px;top:1330.5px;height:48px;line-height:48px;font-size:27px;font-weight:400;color:#fff;letter-spacing:-1.665px;-webkit-text-stroke:0.25px;">OK</div>
</div></body></html>
